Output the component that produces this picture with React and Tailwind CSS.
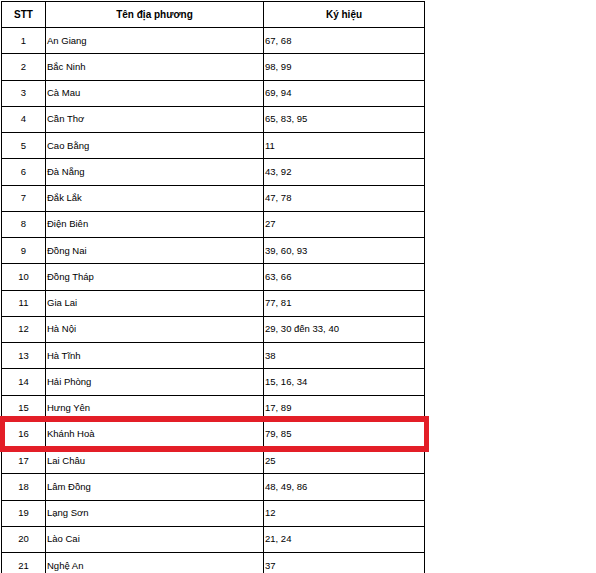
import React from "react";

const rows = [
  ["1", "An Giang", "67, 68"],
  ["2", "Bắc Ninh", "98, 99"],
  ["3", "Cà Mau", "69, 94"],
  ["4", "Cần Thơ", "65, 83, 95"],
  ["5", "Cao Bằng", "11"],
  ["6", "Đà Nẵng", "43, 92"],
  ["7", "Đắk Lắk", "47, 78"],
  ["8", "Điện Biên", "27"],
  ["9", "Đồng Nai", "39, 60, 93"],
  ["10", "Đồng Tháp", "63, 66"],
  ["11", "Gia Lai", "77, 81"],
  ["12", "Hà Nội", "29, 30 đến 33, 40"],
  ["13", "Hà Tĩnh", "38"],
  ["14", "Hải Phòng", "15, 16, 34"],
  ["15", "Hưng Yên", "17, 89"],
  ["16", "Khánh Hoà", "79, 85"],
  ["17", "Lai Châu", "25"],
  ["18", "Lâm Đồng", "48, 49, 86"],
  ["19", "Lạng Sơn", "12"],
  ["20", "Lào Cai", "21, 24"],
  ["21", "Nghệ An", "37"],
];

export default function App() {
  return (
    <div className="relative w-[596px] h-[573px] overflow-hidden bg-white" style={{ fontFamily: '"Liberation Sans", Arial, sans-serif' }}>
      <div className="pt-[1px] pl-[1px]">
        <table className="border-collapse table-fixed text-[9.5px] text-black">
          <colgroup>
            <col className="w-[44px]" />
            <col className="w-[218px]" />
            <col className="w-[161px]" />
          </colgroup>
          <thead>
            <tr className="h-[26px]">
              <th className="border border-black text-center align-middle font-bold text-[10px]">STT</th>
              <th className="border border-black text-center align-middle font-bold text-[10px]">Tên địa phương</th>
              <th className="border border-black text-center align-middle font-bold text-[10px]">Ký hiệu</th>
            </tr>
          </thead>
          <tbody>
            {rows.map((r) => (
              <tr key={r[0]} className="h-[26.25px]">
                <td className="border border-black text-center align-middle p-0">{r[0]}</td>
                <td className="border border-black text-left align-middle p-0 pl-[1px]">{r[1]}</td>
                <td className="border border-black text-left align-middle p-0 pl-[1px]">{r[2]}</td>
              </tr>
            ))}
          </tbody>
        </table>
      </div>
      <div className="absolute left-0 top-[416px] w-[429px] h-[36px] border-x-[5px] border-y-[6px] border-[#e31e27]" />
    </div>
  );
}
